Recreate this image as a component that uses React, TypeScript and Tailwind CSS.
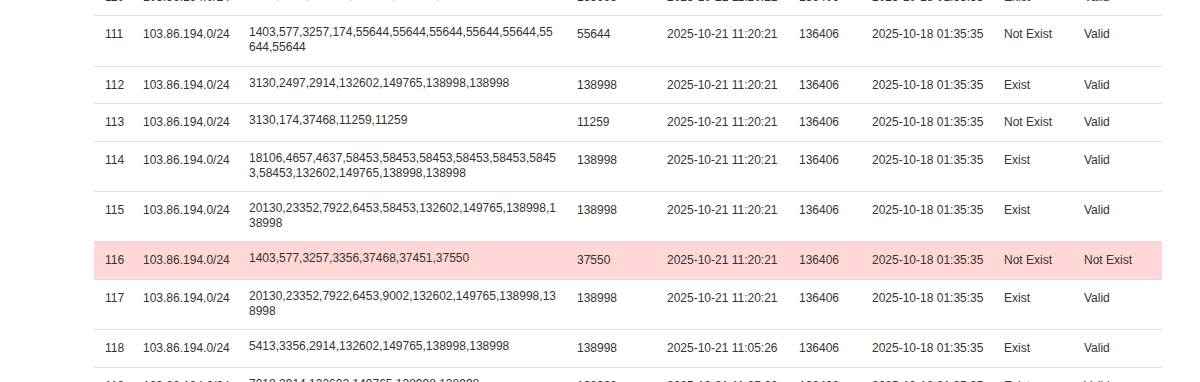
import React from "react";

type Row = {
  id: number;
  prefix: string;
  path: string;
  origin: string;
  checked: string;
  asn: string;
  created: string;
  roa: string;
  status: string;
  bad?: boolean;
};

const rows: Row[] = [
  { id: 110, prefix: "103.86.194.0/24", path: "3130,2914,132602,149765,138998,138998", origin: "138998", checked: "2025-10-21 11:20:21", asn: "136406", created: "2025-10-18 01:35:35", roa: "Exist", status: "Valid" },
  { id: 111, prefix: "103.86.194.0/24", path: "1403,577,3257,174,55644,55644,55644,55644,55644,55644,55644", origin: "55644", checked: "2025-10-21 11:20:21", asn: "136406", created: "2025-10-18 01:35:35", roa: "Not Exist", status: "Valid" },
  { id: 112, prefix: "103.86.194.0/24", path: "3130,2497,2914,132602,149765,138998,138998", origin: "138998", checked: "2025-10-21 11:20:21", asn: "136406", created: "2025-10-18 01:35:35", roa: "Exist", status: "Valid" },
  { id: 113, prefix: "103.86.194.0/24", path: "3130,174,37468,11259,11259", origin: "11259", checked: "2025-10-21 11:20:21", asn: "136406", created: "2025-10-18 01:35:35", roa: "Not Exist", status: "Valid" },
  { id: 114, prefix: "103.86.194.0/24", path: "18106,4657,4637,58453,58453,58453,58453,58453,58453,58453,132602,149765,138998,138998", origin: "138998", checked: "2025-10-21 11:20:21", asn: "136406", created: "2025-10-18 01:35:35", roa: "Exist", status: "Valid" },
  { id: 115, prefix: "103.86.194.0/24", path: "20130,23352,7922,6453,58453,132602,149765,138998,138998", origin: "138998", checked: "2025-10-21 11:20:21", asn: "136406", created: "2025-10-18 01:35:35", roa: "Exist", status: "Valid" },
  { id: 116, prefix: "103.86.194.0/24", path: "1403,577,3257,3356,37468,37451,37550", origin: "37550", checked: "2025-10-21 11:20:21", asn: "136406", created: "2025-10-18 01:35:35", roa: "Not Exist", status: "Not Exist", bad: true },
  { id: 117, prefix: "103.86.194.0/24", path: "20130,23352,7922,6453,9002,132602,149765,138998,138998", origin: "138998", checked: "2025-10-21 11:20:21", asn: "136406", created: "2025-10-18 01:35:35", roa: "Exist", status: "Valid" },
  { id: 118, prefix: "103.86.194.0/24", path: "5413,3356,2914,132602,149765,138998,138998", origin: "138998", checked: "2025-10-21 11:05:26", asn: "136406", created: "2025-10-18 01:35:35", roa: "Exist", status: "Valid" },
  { id: 119, prefix: "103.86.194.0/24", path: "7018,2914,132602,149765,138998,138998", origin: "138998", checked: "2025-10-21 11:05:26", asn: "136406", created: "2025-10-18 01:35:35", roa: "Exist", status: "Valid" },
];

const td = "border-t border-[#dddddd] px-2 pt-2 pb-2 align-top leading-[20.4px]";

export default function App() {
  return (
    <div className="h-[382px] overflow-hidden bg-white pl-[94px] pr-[38px] font-['Liberation_Sans',Arial,sans-serif] text-[12px] text-[#333333]">
      <table className="-mt-[22px] w-[1068px] table-fixed border-collapse">
        <colgroup>
          <col className="w-[41px]" />
          <col className="w-[106px]" />
          <col className="w-[328px]" />
          <col className="w-[90px]" />
          <col className="w-[132px]" />
          <col className="w-[73px]" />
          <col className="w-[132px]" />
          <col className="w-[80px]" />
          <col className="w-[86px]" />
        </colgroup>
        <tbody>
          {rows.map((r) => (
            <tr key={r.id} className={r.bad ? "bg-[#ffd7d7]" : ""}>
              <td className={`${td} pl-[11px]`}>{r.id}</td>
              <td className={td}>{r.prefix}</td>
              <td className="border-t border-[#dddddd] pl-2 pr-[11px] pt-[9px] pb-[10.4px] align-top leading-[15px] break-all">
                {r.path}
              </td>
              <td className={td}>{r.origin}</td>
              <td className={td}>{r.checked}</td>
              <td className={td}>{r.asn}</td>
              <td className={td}>{r.created}</td>
              <td className={td}>{r.roa}</td>
              <td className={td}>{r.status}</td>
            </tr>
          ))}
        </tbody>
      </table>
    </div>
  );
}
